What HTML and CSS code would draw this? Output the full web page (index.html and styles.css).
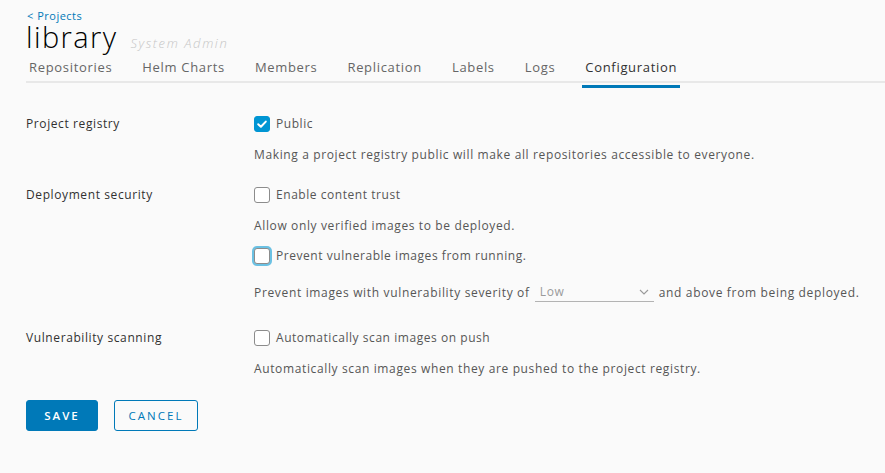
FILE: index.html
```html
<!DOCTYPE html>
<html>
<head>
<meta charset="utf-8">
<link rel="stylesheet" href="styles.css">
</head>
<body>
<div class="page">
  <header class="head">
    <a class="back">&lt; Projects</a>
    <div class="title-row">
      <h1 class="title">library</h1>
      <span class="role">System Admin</span>
    </div>
    <nav class="tabs">
      <span class="tab">Repositories</span>
      <span class="tab">Helm Charts</span>
      <span class="tab">Members</span>
      <span class="tab">Replication</span>
      <span class="tab">Labels</span>
      <span class="tab">Logs</span>
      <span class="tab active">Configuration</span>
    </nav>
  </header>

  <section class="form">
    <div class="row">
      <div class="label">Project registry</div>
      <div class="controls">
        <label class="check"><span class="box checked"><svg viewBox="0 0 16 16" width="16" height="16"><path d="M4.2 8.2 L6.9 10.8 L11.8 5.6" fill="none" stroke="#fff" stroke-width="2" stroke-linecap="round" stroke-linejoin="round"/></svg></span>Public</label>
        <p class="help">Making a project registry public will make all repositories accessible to everyone.</p>
      </div>
    </div>
    <div class="row r2">
      <div class="label">Deployment security</div>
      <div class="controls">
        <label class="check"><span class="box"></span>Enable content trust</label>
        <p class="help">Allow only verified images to be deployed.</p>
        <label class="check c2"><span class="box focus"></span>Prevent vulnerable images from running.</label>
        <div class="severity">Prevent images with vulnerability severity of
          <span class="select">Low<svg viewBox="0 0 10 6" width="10" height="6"><path d="M1 1 L5 5 L9 1" fill="none" stroke="#9a9a9a" stroke-width="1.1"/></svg></span>
          and above from being deployed.</div>
      </div>
    </div>
    <div class="row r3">
      <div class="label">Vulnerability scanning</div>
      <div class="controls">
        <label class="check"><span class="box"></span>Automatically scan images on push</label>
        <p class="help">Automatically scan images when they are pushed to the project registry.</p>
      </div>
    </div>
    <div class="buttons">
      <button class="btn primary">SAVE</button>
      <button class="btn outline">CANCEL</button>
    </div>
  </section>
</div>
</body>
</html>
```
FILE: styles.css
```css
* { box-sizing: border-box; }
html, body { margin: 0; padding: 0; background: #fafafa; }
body { font-family: "Open Sans", "DejaVu Sans", sans-serif; color: #313131; }
.page { padding: 9px 0 0 26px; }
.head { display: flex; flex-direction: column; }
.back { font-size: 11px; line-height: 14px; color: #0079b8; padding-left: 1px; letter-spacing: 0.5px; }
.title-row { display: flex; align-items: baseline; height: 30px; margin-top: 1px; }
.title { margin: 0; font-size: 29px; font-weight: 300; line-height: 26px; color: #000; letter-spacing: 1.4px; }
.role { font-size: 13px; font-style: italic; color: #c6c6c6; margin-left: 13px; font-weight: 300; letter-spacing: 1.6px; }
.tabs { display: flex; gap: 30px; border-bottom: 2px solid #e8e8e8; margin-top: 4px; height: 25px; padding-left: 3px; }
.tab { font-size: 13px; color: #666; line-height: 18px; position: relative; letter-spacing: 0.68px; }
.tab.active { color: #313131; }
.tab.active::after { content: ""; position: absolute; left: -3px; right: -3px; bottom: -7px; height: 3px; background: #0079b8; }
.form { padding-top: 33px; }
.row { display: grid; grid-template-columns: 228px 1fr; }
.r2 { margin-top: 24px; }
.r3 { margin-top: 28px; }
.label { font-size: 12px; line-height: 16px; color: #313131; letter-spacing: 0.6px; }
.controls { display: flex; flex-direction: column; align-items: flex-start; }
.check { display: flex; align-items: center; gap: 6px; font-size: 12px; line-height: 16px; color: #565656; letter-spacing: 0.55px; }
.box { width: 16px; height: 16px; border: 1px solid #8c8c8c; border-radius: 3px; background: #fff; display: inline-flex; }
.box.checked { background: #0095d3; border-color: #0095d3; }
.box.checked svg { margin: -1px; }
.box.focus { box-shadow: 0 0 0 2px #6bc1e3; border-color: #8c8c8c; }
.help { margin: 15px 0 0; font-size: 12px; line-height: 16px; color: #565656; letter-spacing: 0.63px; }
.c2 { margin-top: 14px; }
.severity { margin-top: 18px; height: 20px; display: flex; align-items: center; font-size: 12px; color: #565656; gap: 5px; letter-spacing: 0.66px; }
.select { width: 119px; height: 20px; border-bottom: 1px solid #b3b3b3; display: flex; align-items: center; justify-content: space-between; padding: 0 5px 0 5px; color: #9a9a9a; }
.buttons { display: flex; gap: 16px; margin-top: 23px; }
.btn { height: 31px; font-family: inherit; font-size: 11.5px; font-weight: 600; letter-spacing: 2px; border-radius: 3px; padding: 0; text-align: center; }
.btn.primary { width: 72px; background: #0079b8; border: 1px solid #0079b8; color: #fff; }
.btn.outline { width: 84px; background: transparent; border: 1px solid #0079b8; color: #0079b8; font-weight: 400; }
```
